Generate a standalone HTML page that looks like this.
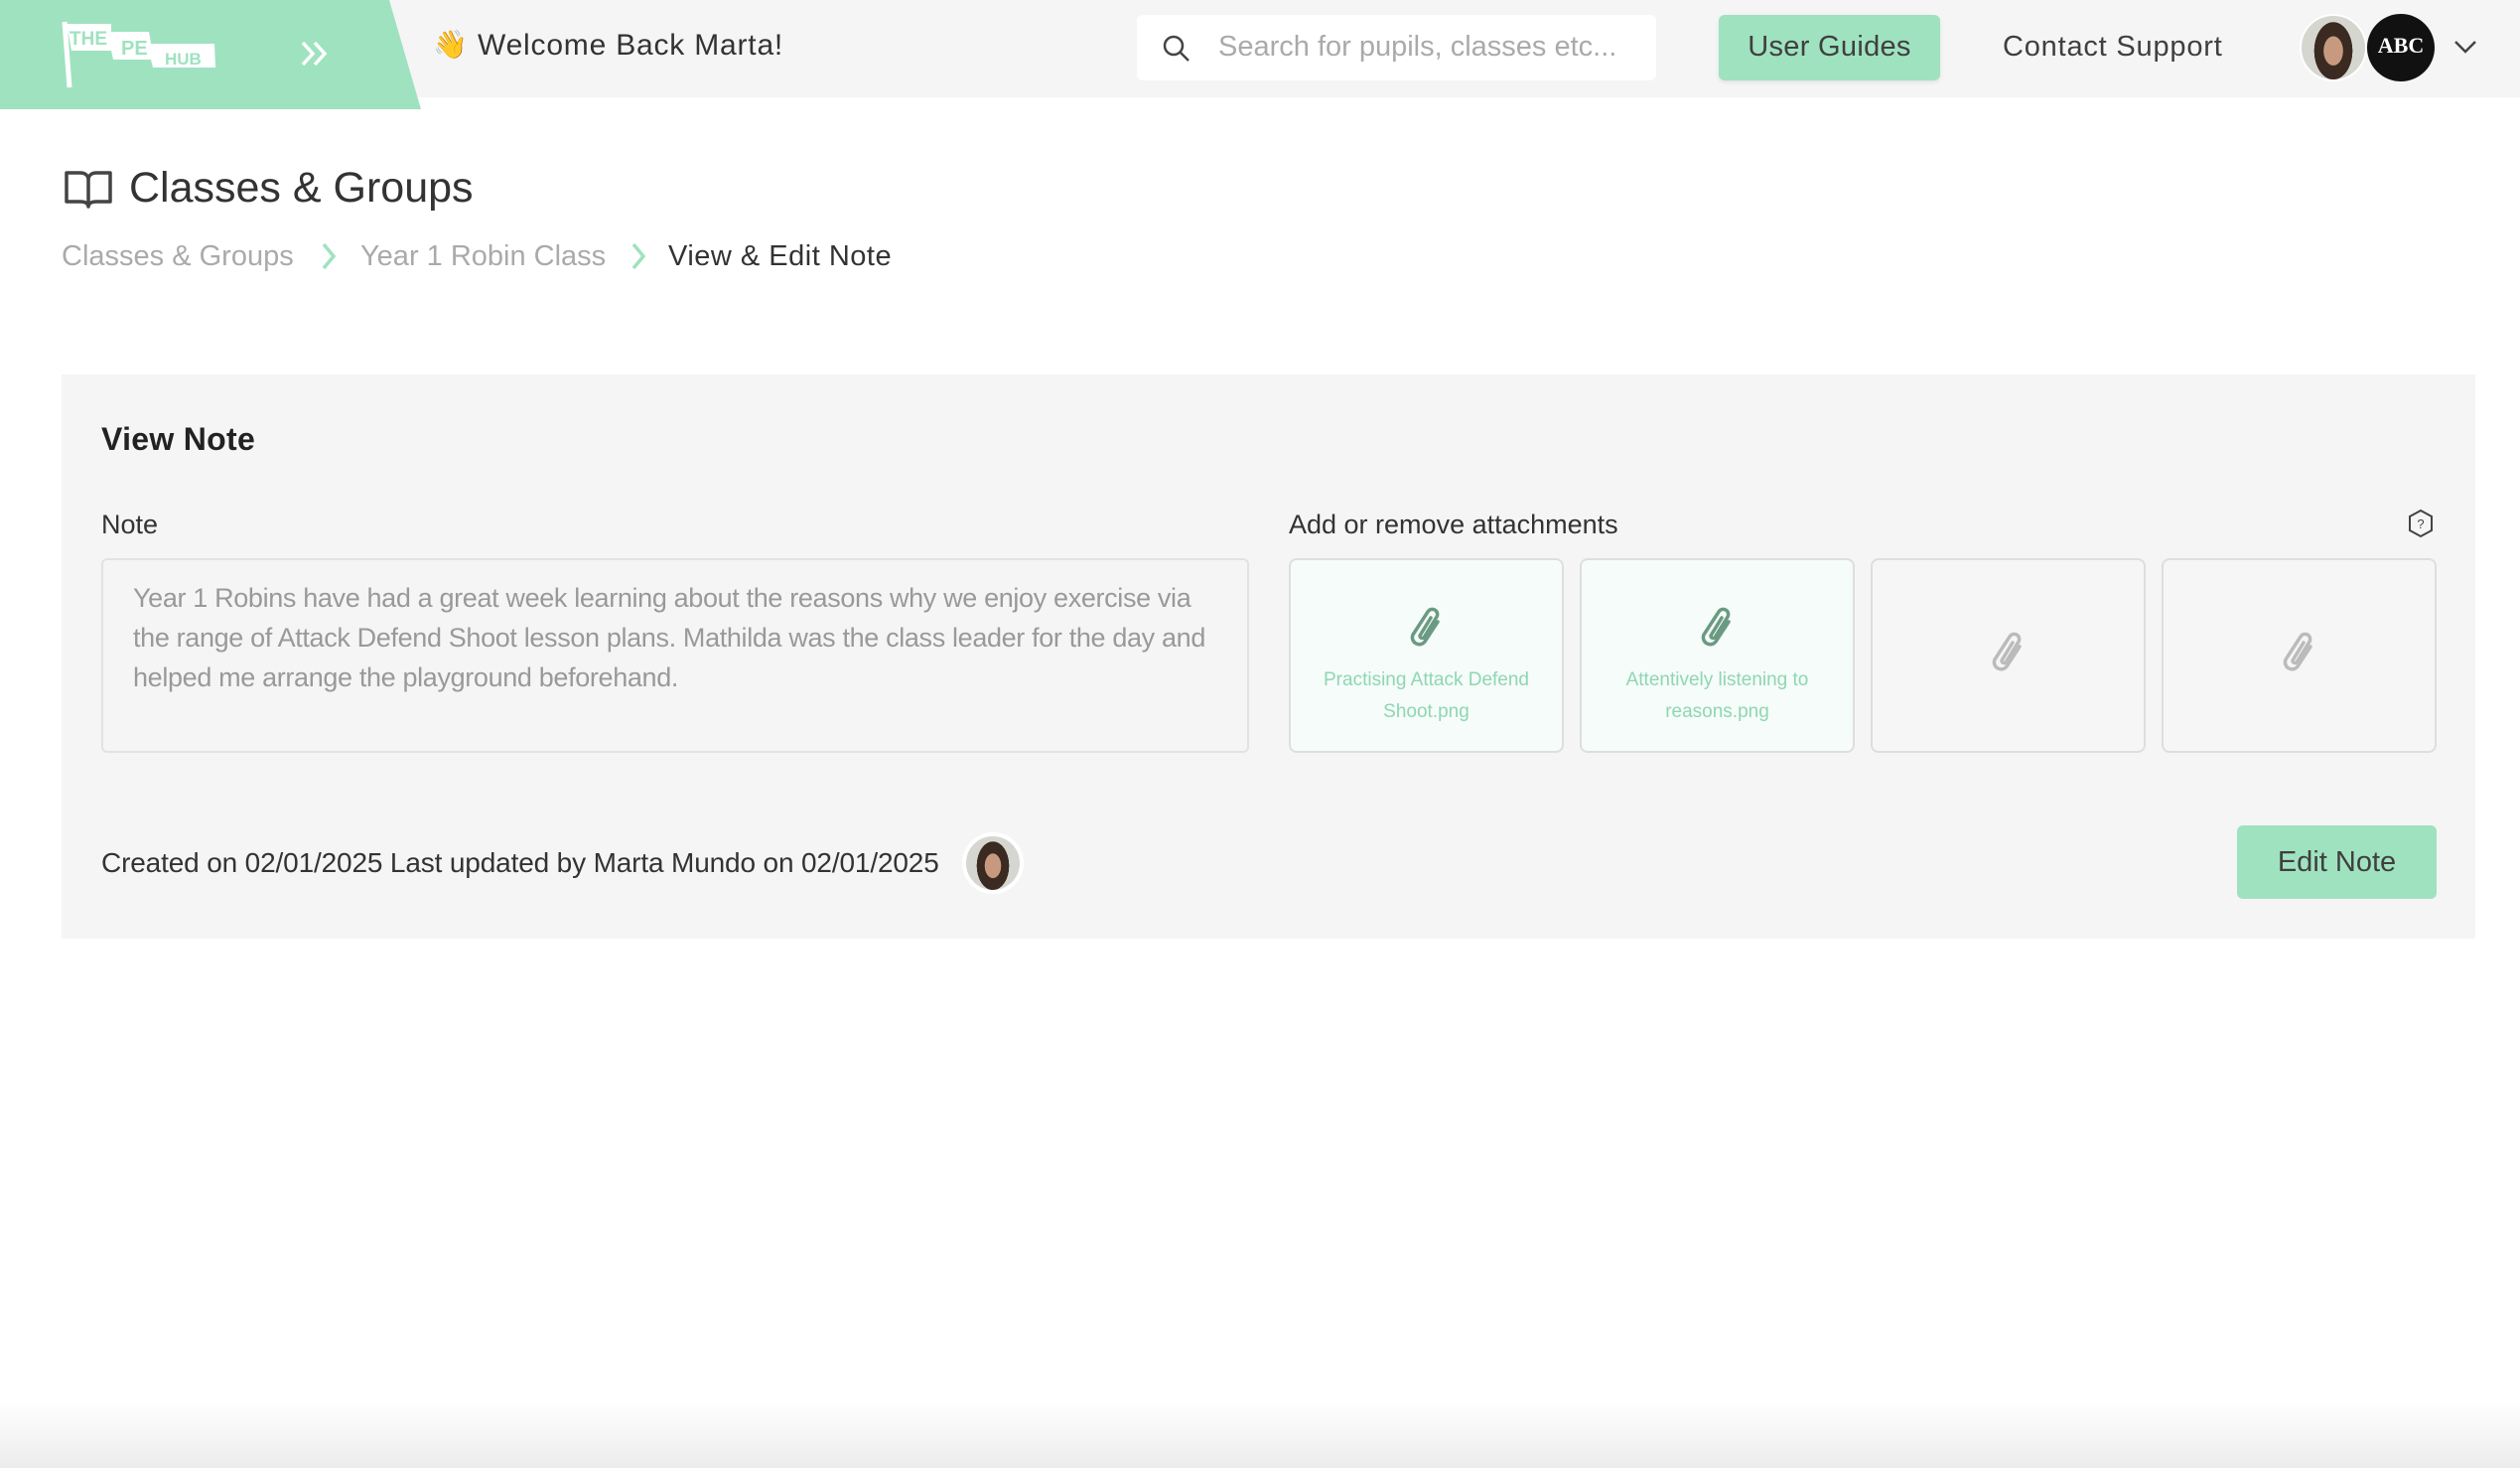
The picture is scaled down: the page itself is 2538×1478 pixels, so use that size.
<!DOCTYPE html>
<html><head><meta charset="utf-8"><style>
*{box-sizing:border-box;margin:0;padding:0}
body{width:2538px;height:1478px;overflow:hidden;background:#fff;font-family:"Liberation Sans",sans-serif;color:#3f3f3f;position:relative}
.abs{position:absolute}
.hdr{left:0;top:0;width:2538px;height:98px;background:#f5f5f5}
.grn{left:0;top:0;width:425px;height:110px;background:#9fe2c0;clip-path:polygon(0 0,392px 0,424px 110px,0 110px)}
.t{white-space:nowrap}
.tile{position:absolute;top:562px;width:277px;height:196px;border:2px solid #dedede;border-radius:8px;background:#f6f6f6}
.tile.on{background:#f5fcf9}
.tile .nm{position:absolute;left:0;right:0;top:105px;text-align:center;color:#8fd6b2;font-size:19px;line-height:32px}
</style></head><body>
<div class="abs hdr"></div>
<div class="abs grn"></div>
<svg class="abs" style="left:60px;top:18px" width="165" height="75" viewBox="0 0 165 75">
<line x1="5" y1="4" x2="10" y2="70" stroke="#fff" stroke-width="5"/>
<polygon points="7,6 52,6 52,33 12,33" fill="#fff"/>
<polygon points="48,14 90,14 95,42 54,42" fill="#fff"/>
<polygon points="88,26 156,26 157,50 94,50" fill="#fff"/>
<text x="10" y="27" font-size="19" font-weight="bold" fill="#9fe2c0" font-family="Liberation Sans">THE</text>
<text x="62" y="37" font-size="20" font-weight="bold" fill="#9fe2c0" font-family="Liberation Sans">PE</text>
<text x="106" y="47" font-size="17" font-weight="bold" fill="#9fe2c0" font-family="Liberation Sans">HUB</text>
</svg>
<svg class="abs" style="left:302px;top:40px" width="30" height="28" viewBox="0 0 30 28"><path d="M3 3l10 11-10 11M15 3l10 11-10 11" stroke="#fff" stroke-width="3.5" fill="none"/></svg>
<div class="abs t" style="left:436px;top:28px;font-size:28px">👋</div>
<div class="abs t" style="left:481px;top:29px;font-size:30px;color:#333;letter-spacing:0.8px">Welcome Back Marta!</div>
<div class="abs" style="left:1145px;top:15px;width:523px;height:66px;background:#fff;border-radius:6px"></div>
<svg class="abs" style="left:1170px;top:34px" width="30" height="30" viewBox="0 0 30 30"><circle cx="12" cy="12" r="9" stroke="#444" stroke-width="2.5" fill="none"/><line x1="19" y1="19" x2="27" y2="27" stroke="#444" stroke-width="2.5"/></svg>
<div class="abs t" style="left:1227px;top:31px;font-size:29px;color:#aaa">Search for pupils, classes etc...</div>
<div class="abs" style="left:1731px;top:15px;width:223px;height:66px;background:#9fe2c0;border-radius:6px;box-shadow:0 2px 4px rgba(0,0,0,.08)"></div>
<div class="abs t" style="left:1731px;top:31px;width:223px;text-align:center;font-size:29px;color:#3f3f3f;letter-spacing:0.3px">User Guides</div>
<div class="abs t" style="left:2017px;top:31px;font-size:29px;color:#3f3f3f;letter-spacing:0.8px">Contact Support</div>
<div class="abs" style="left:2316px;top:14px;width:68px;height:68px;border-radius:50%;background:radial-gradient(ellipse 30% 45% at 50% 55%,#c79a80 0 50%,#3a2a22 52% 100%,transparent 101%),#d6d6d0;border:2px solid #fff"></div>
<div class="abs" style="left:2384px;top:14px;width:68px;height:68px;border-radius:50%;background:#111;color:#fff;text-align:center;font-weight:bold;font-size:22px;line-height:64px;font-family:'Liberation Serif',serif">ABC</div>
<svg class="abs" style="left:2470px;top:38px" width="26" height="18" viewBox="0 0 26 18"><path d="M3 4l10 10 10-10" stroke="#444" stroke-width="2.5" fill="none"/></svg>
<svg class="abs" style="left:64px;top:170px" width="50" height="40" viewBox="0 0 50 40"><path d="M3 4h14c5 0 8 3 8 7v27c0-3-3-5-8-5H3zM47 4H33c-5 0-8 3-8 7v27c0-3 3-5 8-5h14z" stroke="#444" stroke-width="3.5" fill="none" stroke-linejoin="round"/></svg>
<div class="abs t" style="left:130px;top:165px;font-size:43px;color:#333">Classes &amp; Groups</div>
<div class="abs t" style="left:62px;top:242px;font-size:29px;color:#aaa">Classes &amp; Groups</div>
<svg class="abs" style="left:322px;top:243px" width="18" height="30" viewBox="0 0 18 30"><path d="M4 3l10 12-10 12" stroke="#9fe2c0" stroke-width="3.5" fill="none"/></svg>
<div class="abs t" style="left:363px;top:242px;font-size:29px;color:#aaa">Year 1 Robin Class</div>
<svg class="abs" style="left:634px;top:243px" width="18" height="30" viewBox="0 0 18 30"><path d="M4 3l10 12-10 12" stroke="#9fe2c0" stroke-width="3.5" fill="none"/></svg>
<div class="abs t" style="left:673px;top:242px;font-size:29px;color:#333;letter-spacing:0.5px">View &amp; Edit Note</div>
<div class="abs" style="left:62px;top:377px;width:2431px;height:568px;background:#f5f5f5"></div>
<div class="abs t" style="left:102px;top:424px;font-size:32px;color:#222;font-weight:bold;letter-spacing:0.3px">View Note</div>
<div class="abs t" style="left:102px;top:513px;font-size:27px;color:#333">Note</div>
<div class="abs" style="left:102px;top:562px;width:1156px;height:196px;border:2px solid #e2e2e2;border-radius:6px;background:#f5f5f5;padding:18px 20px 18px 30px;font-size:27px;line-height:40px;color:#999;letter-spacing:-0.35px">Year 1 Robins have had a great week learning about the reasons why we enjoy exercise via the range of Attack Defend Shoot lesson plans. Mathilda was the class leader for the day and helped me arrange the playground beforehand.</div>
<div class="abs t" style="left:1298px;top:513px;font-size:27px;color:#333">Add or remove attachments</div>
<svg class="abs" style="left:2424px;top:512px" width="28" height="30" viewBox="0 0 28 30"><polygon points="14,2 25,8 25,22 14,28 3,22 3,8" stroke="#444" stroke-width="2" fill="none"/><text x="14" y="20" font-size="13" text-anchor="middle" fill="#444" font-family="Liberation Sans">?</text></svg>
<div class="tile on" style="left:1298px"><svg class="abs" style="left:118px;top:46px" width="40" height="44" viewBox="0 0 40 44"><path d="M30 16L17 36a7 7 0 0 1-12-7L20 6a5 5 0 0 1 9 5L16 32a2.5 2.5 0 0 1-4-2l11-18" stroke="#6b9a83" stroke-width="3.5" fill="none" stroke-linecap="round"/></svg><div class="nm">Practising Attack Defend<br>Shoot.png</div></div>
<div class="tile on" style="left:1591px"><svg class="abs" style="left:118px;top:46px" width="40" height="44" viewBox="0 0 40 44"><path d="M30 16L17 36a7 7 0 0 1-12-7L20 6a5 5 0 0 1 9 5L16 32a2.5 2.5 0 0 1-4-2l11-18" stroke="#6b9a83" stroke-width="3.5" fill="none" stroke-linecap="round"/></svg><div class="nm">Attentively listening to<br>reasons.png</div></div>
<div class="tile" style="left:1884px"><svg class="abs" style="left:118px;top:71px" width="40" height="44" viewBox="0 0 40 44"><path d="M30 16L17 36a7 7 0 0 1-12-7L20 6a5 5 0 0 1 9 5L16 32a2.5 2.5 0 0 1-4-2l11-18" stroke="#bbb" stroke-width="3.5" fill="none" stroke-linecap="round"/></svg></div>
<div class="tile" style="left:2177px"><svg class="abs" style="left:118px;top:71px" width="40" height="44" viewBox="0 0 40 44"><path d="M30 16L17 36a7 7 0 0 1-12-7L20 6a5 5 0 0 1 9 5L16 32a2.5 2.5 0 0 1-4-2l11-18" stroke="#bbb" stroke-width="3.5" fill="none" stroke-linecap="round"/></svg></div>
<div class="abs t" style="left:102px;top:853px;font-size:28px;color:#333;letter-spacing:-0.15px">Created on 02/01/2025 Last updated by Marta Mundo on 02/01/2025</div>
<div class="abs" style="left:969px;top:838px;width:62px;height:62px;border-radius:50%;background:radial-gradient(ellipse 30% 45% at 50% 55%,#c79a80 0 50%,#3a2a22 52% 100%,transparent 101%),#d6d6d0;border:4px solid #fff"></div>
<div class="abs" style="left:2253px;top:831px;width:201px;height:74px;background:#9fe2c0;border-radius:6px"></div>
<div class="abs t" style="left:2253px;top:852px;width:201px;text-align:center;font-size:29px;color:#3f3f3f">Edit Note</div>
<div class="abs" style="left:0;top:1410px;width:2538px;height:68px;background:linear-gradient(#fff,#ececec)"></div>
</body></html>
